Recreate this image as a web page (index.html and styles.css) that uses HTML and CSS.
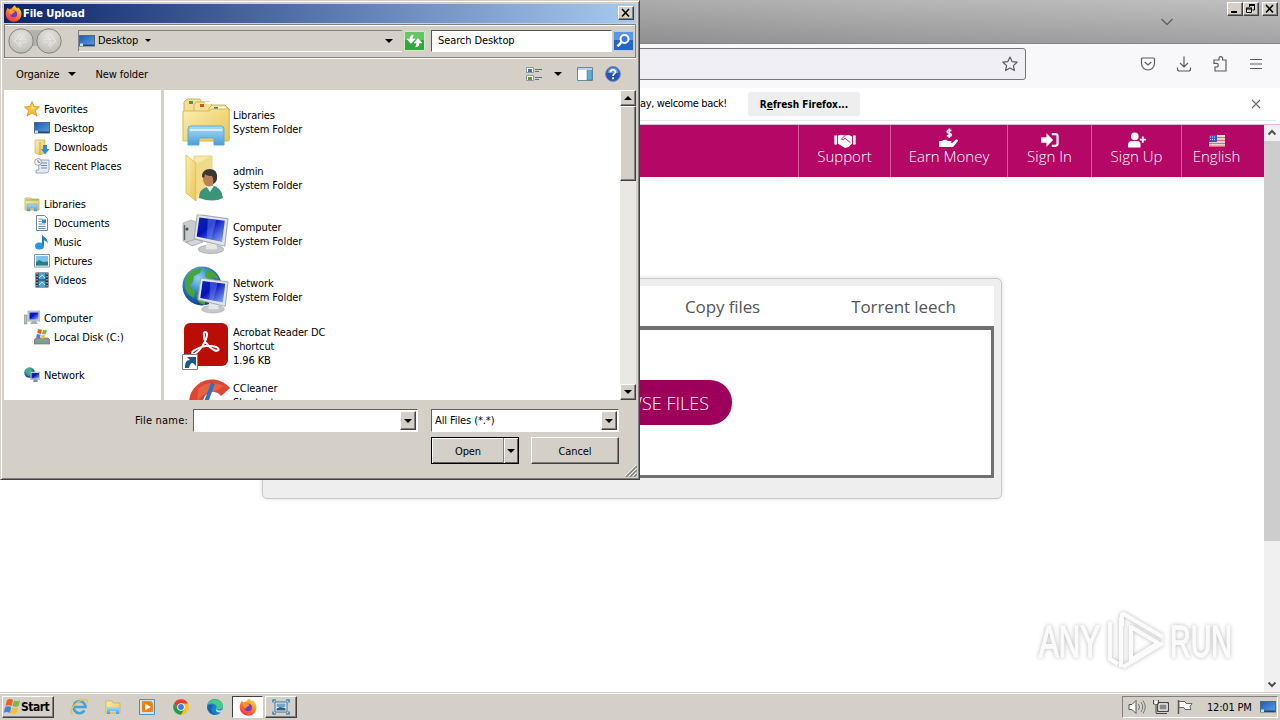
FILE: index.html
```
<!DOCTYPE html>
<html lang="en">
<head>
  <meta charset="UTF-8">
  <title>File Upload</title>
  <link rel="stylesheet" href="styles.css">
</head>
<body>

  <!-- shared gradients and icons -->
  <svg class="defs" width="0" height="0">
    <defs>
      <linearGradient id="g-screen" x1="0" y1="0" x2="1" y2="1">
        <stop offset="0" stop-color="#0a2a9c"/><stop offset=".4" stop-color="#0510c0"/><stop offset="1" stop-color="#8fb4f4"/>
      </linearGradient>
      <linearGradient id="g-desk" x1="0" y1="0" x2="1" y2="1">
        <stop offset="0" stop-color="#1c5ab4"/><stop offset="1" stop-color="#5aa0e8"/>
      </linearGradient>
      <linearGradient id="g-folder" x1="0" y1="0" x2="1" y2="1">
        <stop offset="0" stop-color="#fbeeb0"/><stop offset="1" stop-color="#e9c552"/>
      </linearGradient>
      <linearGradient id="g-blue" x1="0" y1="0" x2="0" y2="1">
        <stop offset="0" stop-color="#a9dcf6"/><stop offset="1" stop-color="#4a9edb"/>
      </linearGradient>
      <radialGradient id="g-globe" cx=".4" cy=".3" r=".8">
        <stop offset="0" stop-color="#8fd4f4"/><stop offset=".5" stop-color="#2678c4"/><stop offset="1" stop-color="#0c2f70"/>
      </radialGradient>
      <linearGradient id="g-fox" x1=".8" y1="0" x2=".2" y2="1">
        <stop offset="0" stop-color="#ffe03a"/><stop offset=".5" stop-color="#ff8020"/><stop offset="1" stop-color="#f0284c"/>
      </linearGradient>
      <radialGradient id="g-nav" cx=".5" cy=".3" r=".7">
        <stop offset="0" stop-color="#e6e4e0"/><stop offset="1" stop-color="#bebcb7"/>
      </radialGradient>
    </defs>
    <symbol id="i-firefox" viewBox="0 0 16 16">
      <path d="M2.500 2.500 4 4c1-.6 1.600-.8 2.500-.8C7 2 8 1 9.500.2c.1 1.500 1 2 2 2.800l.5-1c2 1.500 3.500 3.500 3.500 6.200A7.300 7.300 0 0 1 8.200 15.800 7.500 7.500 0 0 1 .6 8.300C.6 6 1.500 4 2.500 2.500z" fill="url(#g-fox)"/>
      <circle cx="8.200" cy="8.500" r="3.300" fill="#7a35c8"/>
      <path d="M3.500 5c1.500-.8 3-.6 4 .4L9.500 6 8 7.500c-1.500.2-1.800 1-1.300 1.800-1.500 0-3-2-3.200-4.300z" fill="#ff9a2a"/>
    </symbol>
    <symbol id="i-desktop" viewBox="0 0 16 14">
      <rect x=".5" y="1.500" width="15" height="10.500" fill="url(#g-desk)" stroke="#53677f"/>
      <path d="M1 10.500h14v1.500H1z" fill="#27466e"/><path d="M1 9.500h3v2.500H1z" fill="#b6e6e8"/>
    </symbol>
    <symbol id="i-pc" viewBox="0 0 16 16">
      <path d="M0 5h3v9H0z" fill="#b9c0b4" stroke="#777" stroke-width=".5"/>
      <path d="M4 1h12v10H4z" fill="#d4d9e2" stroke="#8890a8" stroke-width=".6"/>
      <path d="M5.500 2.500h9v7h-9z" fill="url(#g-screen)"/><path d="M8 11h4l2 3H6z" fill="#aab0b8"/>
    </symbol>
    <symbol id="i-monitor" viewBox="0 0 34 38">
      <ellipse cx="17" cy="33" rx="12" ry="4" fill="#c5c9c8" stroke="#a2a6a5" stroke-width=".7"/>
      <path d="m13 25 9 2 1 6H12z" fill="#e6e8e8"/>
      <path d="M4 0 33 4l-3 26L1 23z" fill="#e2e5e8" stroke="#a4a8ae"/>
      <path d="m6 3 24 3-2.500 20L3.500 21z" fill="url(#g-screen)"/>
      <path d="m14 4 8 1-5 19-4-1z" fill="#7c9df0" opacity=".4"/>
    </symbol>
  </svg>

  <!-- Firefox window -->
  <div class="browser">
    <div class="tabstrip">
      <svg class="alltabs" width="14" height="8" viewBox="0 0 14 8"><path d="M1.500 1 7 6.500 12.500 1" fill="none" stroke="#606060" stroke-width="1.300"/></svg>
      <div class="winbtns">
        <button class="winbtn"><svg width="14" height="12"><path d="M3 8h6v2H3z"/></svg></button>
        <button class="winbtn"><svg width="14" height="12"><path d="M5 1.500h6M5.500 1v3M10.500 1v6H8.500M5 2.500h6M2.500 5v4.500h5V5M2 5h6M2 6h6" fill="none" stroke="#000"/></svg></button>
        <button class="winbtn close"><svg width="14" height="12"><path d="m3 2 7 7.500M10 2 3 9.500" stroke="#000" stroke-width="1.600"/></svg></button>
      </div>
    </div>

    <div class="navbar">
      <div class="urlbar">
        <svg width="16" height="16" viewBox="0 0 16 16"><path d="m8 1 2.100 4.600 5 .6-3.700 3.400 1 5L8 12.100l-4.400 2.500 1-5L.9 6.200l5-.6z" fill="none" stroke="#5b5b66" stroke-width="1.200" stroke-linejoin="round"/></svg>
      </div>
      <div class="tools">
        <svg width="16" height="16" viewBox="0 0 16 16"><path d="M2.500 2h11q1 0 1 1v4.500a6.500 6.500 0 0 1-13 0V3q0-1 1-1zM4.700 6 8 9l3.300-3"/></svg>
        <svg width="16" height="16" viewBox="0 0 16 16"><path d="M8 .5v10M4 7l4 4 4-4M1.500 11.500V13q0 2 2 2h9q2 0 2-2v-1.500"/></svg>
        <svg width="16" height="16" viewBox="0 0 16 16"><path d="M7 4V2.500a1.800 1.800 0 0 1 3.600 0V4h3.400v11H3v-4h1.500a1.800 1.800 0 0 0 0-3.600H2V4z"/></svg>
        <svg width="16" height="16" viewBox="0 0 16 16"><path d="M2 3.500h12M2 8h12M2 12.500h12"/></svg>
      </div>
    </div>

    <div class="notice">
      <span class="notice-text">By the way, welcome back!</span>
      <button class="refresh">R<u>e</u>fresh Firefox...</button>
      <svg class="notice-close" width="10" height="10" viewBox="0 0 10 10"><path d="m1 1 8 8M9 1 1 9" stroke="#666" stroke-width="1.100"/></svg>
    </div>

    <div class="viewport">
      <div class="page">
        <nav class="menu">
          <a class="item support">
            <svg width="24" height="18" viewBox="0 0 24 18"><path d="M0 4h3v10H0zM21 4h3v10h-3zM4 4l4-1 4 1 4-1 4 2v8l-4 4-4 1-5-3-3-2z" fill="#fff"/><path d="m12 4-4 4q2 2 4-1l6 5" fill="none" stroke="#b50766"/></svg>
            Support</a>
          <a class="item earn">
            <svg width="20" height="20" viewBox="0 0 20 20"><path d="M0 13h3q3-2.500 6 0h3q2 1-1 2H8h5l4-3.500q3-.5 2 1.500l-5 6H0z" fill="#fff"/><path d="M12.500 2.800C10 1.300 8 2.500 8.200 3.800c.2 1.900 4.200 1 4.200 3 0 1.600-2.500 2-4.500.6M10.300.5v9.500" fill="none" stroke="#fff" stroke-width="1.600"/></svg>
            Earn Money</a>
          <a class="item signin">
            <svg width="20" height="18" viewBox="0 0 20 18"><path d="M0 6h6V1.500L13.500 9 6 16.500V12H0z" fill="#fff"/><path d="M12 2.500h4q2.500 0 2.500 2.500v8q0 2.500-2.500 2.500h-4" fill="none" stroke="#fff" stroke-width="2.500"/></svg>
            Sign In</a>
          <a class="item signup">
            <svg width="20" height="18" viewBox="0 0 20 18"><circle cx="7.500" cy="5" r="4.300" fill="#fff"/><path d="M0 17.500V14q0-4 4-4h6q4 0 4 4v3.500z" fill="#fff"/><path d="M16.500 5v7M13 8.500h7" stroke="#fff" stroke-width="2"/></svg>
            Sign Up</a>
          <a class="item lang">
            <svg width="16" height="12" viewBox="0 0 16 12"><path d="M0 0h16v12H0z" fill="#f4eef2"/><path d="M0 2.500h16M0 5.500h16M0 8.500h16M0 11.200h16" stroke="#e4686c" stroke-width="1.500"/><path d="M0 0h8v7H0z" fill="#315cc0"/><path d="M1 2h6M1 4.500h6" stroke="#dce6ff" stroke-dasharray="1 1"/></svg>
            English</a>
        </nav>

        <div class="uploader">
          <div class="tabs">
            <span class="tab copy">Copy files</span>
            <span class="tab">Torrent leech</span>
          </div>
          <div class="dropzone">
            <button class="browse">BROWSE FILES</button>
          </div>
        </div>
      </div>
      <div class="scrollbar">
        <svg width="16" height="16" viewBox="0 0 16 16"><path d="m4.500 9.500 3.500-3.500 3.500 3.500" fill="none" stroke="#505050" stroke-width="2"/></svg>
        <div class="thumb"></div>
        <svg class="down" width="16" height="16" viewBox="0 0 16 16"><path d="M4.500 6.500 8 10l3.500-3.500" fill="none" stroke="#505050" stroke-width="2"/></svg>
      </div>
    </div>
  </div>

  <svg class="watermark" width="206" height="72" viewBox="0 0 206 72">
    <g class="mark">
      <text x="7" y="52" textLength="61" lengthAdjust="spacingAndGlyphs">ANY</text>
      <text x="138" y="52" textLength="62" lengthAdjust="spacingAndGlyphs">RUN</text>
      <path d="M89 12v50M78 17v37l8 5M90 8l41 24M90 8v13M99 22l27 16-27 17zM131 38 91 62" />
    </g>
  </svg>

  <!-- File Upload dialog -->
  <div class="dialog">
    <div class="titlebar">
      <svg width="17" height="17"><use href="#i-firefox"/></svg>
      <span class="title">File Upload</span>
      <button class="winbtn"><svg width="14" height="12"><path d="m3 2 7 7.500M10 2 3 9.500" stroke="#000" stroke-width="1.600"/></svg></button>
    </div>

    <div class="addressrow">
      <svg class="backfwd" width="56" height="28" viewBox="0 0 56 28">
        <path d="M14 3h28v12q-14 8-28 0z" fill="#b4b2ac"/>
        <g fill="url(#g-nav)" stroke="#85837e"><circle cx="14" cy="14" r="12.200"/><circle cx="42" cy="14" r="12.200"/></g>
        <path d="M20 14H9m5-5-5 5 5 5M36 14h11m-5-5 5 5-5 5" fill="none" stroke="#f6f5f3" stroke-width="2.600"/>
        <path d="M20 14H9m5-5-5 5 5 5M36 14h11m-5-5 5 5-5 5" fill="none" stroke="#cfcdc8" stroke-width="1.400"/>
      </svg>
      <div class="address">
        <svg width="16" height="14"><use href="#i-desktop"/></svg>
        <span>Desktop</span>
        <i class="arrow small"></i>
        <i class="arrow end"></i>
      </div>
      <svg class="go" width="21" height="20" viewBox="0 0 21 20"><path d="M.5.5h20v19H.5z" fill="#32a83c" stroke="#cde9cb"/><path d="M1 1h19v8H1z" fill="#64c564"/><path d="M9.500 4Q6 4 6 7.500V8H3l4 4.500L11 8H8.500M11.500 16q3.500 0 3.500-3.500V12h3l-4-4.500L10 12h2.500" fill="#fff" stroke="#fff" stroke-width=".6"/></svg>
      <div class="search">Search Desktop</div>
      <svg class="lens" width="21" height="20" viewBox="0 0 21 20"><path d="M.5.5h20v19H.5z" fill="#2363cc" stroke="#b9cdeb"/><path d="M1 1h19v8H1z" fill="#5b95e6"/><circle cx="11.500" cy="8" r="4" fill="#3d77db" stroke="#fff" stroke-width="2"/><path d="M8.500 11 4.500 15.500" stroke="#fff" stroke-width="2.600"/></svg>
    </div>

    <div class="commands">
      <span>Organize</span><i class="arrow"></i>
      <span class="newfolder">New folder</span>
      <svg class="views" width="16" height="16" viewBox="0 0 16 16"><path d="M.5 1.500h7v5h-7zM.5 9.500h7v5h-7z" fill="#fff" stroke="#8c979f"/><path d="M2 3h4v3H2z" fill="#2e79ba"/><path d="M2 11h4v3H2z" fill="#5b9831"/><path d="M9 3.500h7M9 5.500h4M9 11.500h7M9 13.500h4" stroke="#57708a"/></svg>
      <i class="arrow"></i>
      <svg class="pane" width="16" height="14" viewBox="0 0 16 14"><path d="M.5.5h15v13H.5z" fill="#fff" stroke="#6c879b"/><path d="M1 1h14v2H1z" fill="#b9d5e9"/><path d="M10 3.500h5V13h-5z" fill="#55b1d5" stroke="#50758c" stroke-width=".6"/></svg>
      <svg class="help" width="16" height="16" viewBox="0 0 16 16"><circle cx="8" cy="8" r="7.400" fill="#2454b0" stroke="#7087b0"/><path d="M2.500 7a5.500 5.500 0 0 1 11 0z" fill="#6c96dc"/><path d="M5.500 6.200C5.500 3 10.500 3 10.500 6c0 2-2.500 1.800-2.500 4M8 11.300v2" fill="none" stroke="#fff" stroke-width="1.700"/></svg>
    </div>

    <div class="panes">
      <div class="sidebar">
        <div class="node top"><svg width="16" height="16" viewBox="0 0 16 16"><path d="m8 .5 2.200 5 5.400.4-4.200 3.600 1.400 5.500L8 12l-4.800 3 1.400-5.500L.4 5.900l5.400-.4z" fill="#ffc233" stroke="#e08a18" stroke-width=".8"/><path d="m8 3 1.200 3.500 3 .3-5 2z" fill="#ffec9a"/></svg>Favorites</div>
        <div class="node"><svg width="16" height="14"><use href="#i-desktop"/></svg>Desktop</div>
        <div class="node"><svg width="16" height="16" viewBox="0 0 16 16"><path d="M1 1h10v13l-5 2-5-2z" fill="url(#g-folder)" stroke="#cba43f" stroke-width=".6"/><path d="M6 3v13" stroke="#c9a648"/><path d="M9 6h4v4h2.500l-4.500 5.500L7 10h2z" fill="#2e8edb"/></svg>Downloads</div>
        <div class="node"><svg width="16" height="16" viewBox="0 0 16 16"><path d="M4 2h11v10q0 3-3 3H2v-3h3z" fill="#e5ebf2" stroke="#8b98a8" stroke-width=".8"/><path d="M7 5h6M7 7.500h6M7 10h6" stroke="#6e87a6"/><circle cx="4" cy="4" r="3.400" fill="#f6f6f6" stroke="#8a8f94" stroke-width=".8"/><path d="M4 2v2.300h2" fill="none" stroke="#4a5560" stroke-width=".7"/></svg>Recent Places</div>

        <div class="node top gap"><svg width="16" height="16" viewBox="0 0 16 16"><path d="M1 3V2h6l1 1h7v11H1z" fill="url(#g-folder)" stroke="#b1a552" stroke-width=".7"/><path d="M2 4h12" stroke="#6cb05a"/><path d="M3 15V8h10v7h-3v-3H6v3z" fill="url(#g-blue)" stroke="#5898c0" stroke-width=".5"/></svg>Libraries</div>
        <div class="node"><svg width="16" height="16" viewBox="0 0 16 16"><path d="M2.500.5h8l3 3v12h-11z" fill="#fff" stroke="#6c87a8"/><path d="M4.500 4h4M4.500 6.500h3M4.500 9h7M4.500 11.500h7M4.500 13.500h7" stroke="#7991b0"/><path d="M8 4.500h4V8H8z" fill="#3a84c0"/></svg>Documents</div>
        <div class="node"><svg width="16" height="16" viewBox="0 0 16 16"><ellipse cx="5.500" cy="12" rx="4.500" ry="3.500" fill="#2f96dc"/><path d="M8 12V.5c1 2.500 6.500 3 5.500 9.500-.5-2.500-2-3.500-3.500-3.500V12z" fill="#2481cb"/></svg>Music</div>
        <div class="node"><svg width="16" height="14" viewBox="0 0 16 14"><path d="M.5.500h15v12.500H.5z" fill="#fff" stroke="#8395a5"/><path d="M2 2h12v9.500H2z" fill="#7bc3ea"/><path d="M2 8.500 5 6l4 2 5-.5v4H2z" fill="#2b7b83"/></svg>Pictures</div>
        <div class="node"><svg width="16" height="16" viewBox="0 0 16 16"><path d="M1.500.500h13v15h-13z" fill="#263340"/><path d="M4.500 1h7v6.500h-7zM4.500 8.500h7V15h-7z" fill="#4aa4da"/><path d="M3 1v14M13 1v14" stroke="#e8eef2" stroke-dasharray="1.500 1.500"/><path d="m5 6 3-3 3 3M5 13l3-3 3 3" fill="none" stroke="#c6e2f0"/></svg>Videos</div>

        <div class="node top gap"><svg width="16" height="16"><use href="#i-pc"/></svg>Computer</div>
        <div class="node"><svg width="16" height="16" viewBox="0 0 16 16"><path d="m2 9 12 0 2 2v4H0v-4z" fill="#8c969b" stroke="#666e73" stroke-width=".6"/><path d="M2 12h9v1.500H2z" fill="#4cc25c"/><path d="m4 0 4 .8L7 5 3.300 4z" fill="#e65a2b"/><path d="m9 1 4 .2L11.500 5.500 8 5z" fill="#7cb83b"/><path d="m3 5 3.700.8-.9 3.700L2 8.500z" fill="#3b85d6"/><path d="m7.700 6 3.500.3-1 3.500-3.500-.3z" fill="#f2c02b"/></svg>Local Disk (C:)</div>

        <div class="node top gap"><svg width="16" height="16" viewBox="0 0 16 16"><circle cx="5.500" cy="5.500" r="5.300" fill="url(#g-globe)"/><path d="M2 3q3-3 5-1L5 5l2 3-3 1z" fill="#43b05c"/><path d="M6.500 5H16v7.500H6.500z" fill="#dce2ec" stroke="#808aa4" stroke-width=".5"/><path d="M7.500 6H15v5.500H7.500z" fill="url(#g-screen)"/><path d="M10 12.500h3l1 2.500H9z" fill="#8890a0"/></svg>Network</div>
      </div>

      <div class="files">
        <div class="file">
          <svg width="48" height="48" viewBox="0 0 48 48">
            <path d="M2 4 5 1h13l2 4v20H2z" fill="#f3df94" stroke="#cdb25a"/><path d="M12 7l2-3h14l3 5v18H12z" fill="#f5e093" stroke="#cdb25a"/>
            <path d="M27 10l3-3h13l4 4v30H27z" fill="#f7e39a" stroke="#cdb25a"/>
            <path d="M7 3h4v3H7z" fill="#48945a"/><path d="M18 6h4v3h-4z" fill="#d05030"/><path d="M32 9h4v3h-4z" fill="#3f8270"/>
            <path d="M23 5h7M36 10h8" stroke="#fff" stroke-width="2"/>
            <path d="M1 13h26l3-2h17v32H1z" fill="url(#g-folder)" stroke="#dcb94d"/>
            <path d="M6 47V31q0-3 3-3h30q3 0 3 3v16H32v-7H17v7z" fill="url(#g-blue)" stroke="#5aa7d8"/><path d="M8 32h32" stroke="#d5effb" stroke-width="2"/>
          </svg>
          <div>Libraries<br>System Folder</div>
        </div>
        <div class="file">
          <svg width="48" height="48" viewBox="0 0 48 48">
            <path d="M12 2h18v36H12z" fill="#f7e8a6" stroke="#e0c56c" stroke-width=".7"/><path d="M4 1l10 8v38L4 39z" fill="url(#g-folder)" stroke="#d3b04c" stroke-width=".7"/><path d="M14 10 30 2v34l-16 10z" fill="#f0d781" opacity=".8"/>
            <path d="M17 44q0-9 8-11l4-2q11 2 12 13-10 5-24 0z" fill="#3d9377"/><path d="m24 32 4 6 4-6z" fill="#e8f0ec"/>
            <ellipse cx="27" cy="25" rx="6" ry="7.500" fill="#b98158"/><path d="M20 23q0-8 8-8 8 0 7 10-1 4-4 5 1-5-1-8-5 0-7-2l-1 4z" fill="#3b3732"/>
          </svg>
          <div>admin<br>System Folder</div>
        </div>
        <div class="file">
          <svg width="48" height="48" viewBox="0 0 48 48">
            <path d="m1 13 8-3 5 2v19l-9 2-4-2z" fill="#c9cccd" stroke="#aaadaf" stroke-width=".7"/><path d="M2.500 15v15" stroke="#60666a" stroke-width="1.500"/><circle cx="5" cy="19" r="1.500" fill="#444"/>
            <path d="m4 32 11-3 6 3-11 4z" fill="#d4d6d8" stroke="#999" stroke-width=".7"/>
            <svg x="11" y="4" width="36" height="41" viewBox="0 0 34 38"><use href="#i-monitor" width="34" height="38"/></svg>
          </svg>
          <div>Computer<br>System Folder</div>
        </div>
        <div class="file">
          <svg width="48" height="48" viewBox="0 0 48 48">
            <circle cx="20" cy="20" r="19.500" fill="url(#g-globe)"/><path d="M4 11Q10 2 20 2l-2 5-6 3-1 6-4 4 6 5-1 7-6-4Q1 21 4 11zM24 3q10 2 13 11l-6-3-3 4-5-5zM14 28l9 3v8q-8-1-9-11z" fill="#48a33b"/>
            <svg x="15" y="12" width="32" height="36" viewBox="0 0 34 38"><use href="#i-monitor" width="34" height="38"/></svg>
          </svg>
          <div>Network<br>System Folder</div>
        </div>
        <div class="file">
          <svg width="48" height="48" viewBox="0 0 48 48">
            <rect x="2" y="1" width="44" height="43" rx="6" fill="#b90d05"/>
            <path d="M22 13c-1-4 3-4 3 0-1 8-8 16-11 18-4 3-6-1-1-3 7-4 15-5 21-3 5 2 2 5-2 3-5-2-11-10-10-15z" fill="none" stroke="#fff" stroke-width="2"/>
            <path d="M.5 32.500h15v15H.5z" fill="#fff" stroke="#7b8088"/><path d="M3 46c0-5 1-8 5-8l-3-3h9v9l-3-3c-3 0-3 2-4 5z" fill="#1e5494"/>
          </svg>
          <div>Acrobat Reader DC<br>Shortcut<br>1.96 KB</div>
        </div>
        <div class="file">
          <svg width="48" height="48" viewBox="0 0 48 48">
            <path d="M48 10A23 23 0 1 0 46 41L38 31a10 10 0 1 1 1-13z" fill="#de4630"/><path d="M16 11Q28 0 42 8L32 14q-12-1-17 12z" fill="#f07254" opacity=".6"/>
            <path d="m31 5-9 25" stroke="#2a74bf" stroke-width="4"/>
          </svg>
          <div>CCleaner<br>Shortcut<br>&nbsp;</div>
        </div>
      </div>

      <div class="classic-scroll">
        <button class="sb"><i class="arrow up"></i></button>
        <div class="sb-thumb"></div>
        <button class="sb sb-down"><i class="arrow"></i></button>
      </div>
    </div>

    <div class="footer">
      <label class="fname">File name:</label>
      <div class="combo name"><span></span><button class="drop"><i class="arrow"></i></button></div>
      <div class="combo type"><span>All Files (*.*)</span><button class="drop"><i class="arrow"></i></button></div>
      <div class="open"><button>Open</button><button class="split"><i class="arrow"></i></button></div>
      <button class="cancel">Cancel</button>
    </div>
    <svg class="grip" width="12" height="12" viewBox="0 0 12 12"><path d="M1 12 12 1M5 12l7-7M9 12l3-3" stroke="#808080" stroke-width="1.500"/><path d="M0 11 11 0M4 11l7-7M8 11l3-3" stroke="#fff" stroke-width=".7"/></svg>
  </div>

  <!-- taskbar -->
  <div class="taskbar">
    <button class="start"><svg width="18" height="18" viewBox="0 0 18 18"><path d="M4 2q3-2 6 0L8.500 8q-3-1.500-6 0z" fill="#e8622b"/><path d="M11 2.500q3 1.500 6 0L15.500 8q-3 1.500-6 0z" fill="#7db942"/><path d="M2.200 9q3-1.500 6 0L7 15q-3-2-6.500 0z" fill="#3f86d8"/><path d="M9.200 9.500q3 1.500 6 0L13.500 15q-3 2-6 0z" fill="#f4c02e"/></svg>Start</button>
    <div class="quick">
      <svg width="18" height="18" viewBox="0 0 18 18"><path d="M14.500 12.500A6 6 0 1 1 15.500 9H5" fill="none" stroke="#3fa2e0" stroke-width="2.600"/><path d="M2.500 16.500C-3 11 11-1 17 2q1 1 0 3" fill="none" stroke="#efc043" stroke-width="1.500"/></svg>
      <svg width="18" height="18" viewBox="0 0 18 18"><path d="M2 3h6l1 2h7v10H2z" fill="url(#g-folder)" stroke="#c5a957" stroke-width=".7"/><path d="M3 16V9h12v7h-3v-3H6v3z" fill="url(#g-blue)"/></svg>
      <svg width="18" height="18" viewBox="0 0 18 18"><path d="M1.500 1.500h15v15h-15z" fill="#cfe3f2" stroke="#528dc0"/><path d="M4 3h9l2 2v9H4z" fill="#f58a15"/><circle cx="9" cy="9" r="5" fill="#f27a0a"/><path d="m7 5.500 6 3.500-6 3.500z" fill="#fff"/></svg>
      <svg width="18" height="18" viewBox="0 0 18 18"><circle cx="9" cy="9" r="7.800" fill="#fbc116"/><path d="M2 5.500A7.800 7.800 0 0 1 16 5.500H9L5.500 10z" fill="#e33b2e"/><path d="M2 5.500A7.800 7.800 0 0 0 9 16.800l3.500-6H6z" fill="#269a48"/><circle cx="9" cy="9" r="3.800" fill="#fff"/><circle cx="9" cy="9" r="2.900" fill="#3a7ae8"/></svg>
      <svg width="18" height="18" viewBox="0 0 18 18"><circle cx="9" cy="9" r="8" fill="#1583cf"/><path d="M1.500 7C3 0 16-1 17 8c0 4-5 4-6.500 2.500C12 6 5 4 1.500 7z" fill="#46cb82"/><path d="M10.500 9q-1 3 2.500 3.500 2.500 0 4-1.500l-1 4-5-1q-2-2-.5-5z" fill="#d4d0c8"/><path d="M7 7q-4 6 3 10-8-1-9-8 2-3 6-2z" fill="#1b5fae"/></svg>
    </div>
    <div class="task active"><svg width="18" height="18"><use href="#i-firefox"/></svg></div>
    <div class="task"><svg width="18" height="16" viewBox="0 0 18 16"><path d="M3 3h12v10H3z" fill="#eef6fa" stroke="#456d86"/><path d="M4.500 9.500 8 8l5.500 1v2.500h-9z" fill="#2c6376"/><path d="M4.500 4.500h9V8h-9z" fill="#69a9d0"/><path d="M1 3.500V1h3M14 1h3v2.500M17 12.500V15h-3M4 15H1v-2.500" fill="none" stroke="#3c8ac0" stroke-width="1.600"/></svg></div>
    <div class="tray">
      <svg width="18" height="16" viewBox="0 0 18 16"><path d="M1 5.500h3l4-4v13l-4-4H1z" fill="#fff" stroke="#555"/><path d="M10.500 5q2 3 0 6M13 3q3.500 5 0 10M15 1.500q4.500 6.500 0 13" fill="none" stroke="#777"/></svg>
      <svg width="18" height="16" viewBox="0 0 18 16"><path d="M5.500 3.500h11v9h-11z" fill="#aaa" stroke="#444"/><path d="M7 5h8v6H7z" fill="#888" stroke="#fff"/><path d="M1.500 1v4h5V1M4 5v9M4 14.500h11" fill="none" stroke="#444"/><path d="M2.500 2h3v3h-3z" fill="#fff"/></svg>
      <svg width="18" height="16" viewBox="0 0 18 16"><path d="M2.500 1v14" stroke="#555" stroke-width="1.500"/><path d="M3 2.500h6l1 2h6l-2 3 1 3H9l-1-2H3z" fill="#fff" stroke="#666"/></svg>
      <span class="clock">12:01 PM</span>
      <svg width="16" height="14"><use href="#i-desktop"/></svg>
    </div>
  </div>

</body>
</html>
```

FILE: styles.css
```
* {
  box-sizing: border-box;
}
body {
  margin: 0;
  width: 1280px;
  height: 720px;
  overflow: hidden;
  position: relative;
  display: flex;
  flex-direction: column;
  background: #fff;
  color: #000;
  font-family: Tahoma, "DejaVu Sans Condensed", "DejaVu Sans", sans-serif;
  font-size: 11px;
  letter-spacing: -0.1px;
}
button {
  font: inherit;
  letter-spacing: inherit;
  color: inherit;
  padding: 0;
  margin: 0;
  border: 0;
  background: none;
}
svg {
  display: block;
  flex: none;
}
.defs {
  position: absolute;
}

/* classic windows bits */
.winbtn {
  width: 16px;
  height: 14px;
  background: #d4d0c8;
  border: 1px solid;
  border-color: #fff #404040 #404040 #fff;
  box-shadow: inset -1px -1px #808080;
}
.arrow {
  flex: none;
  width: 0;
  height: 0;
  border: 4px solid transparent;
  border-top-color: #000;
  border-bottom: 0;
}
.arrow.small {
  border-width: 3px;
  border-bottom: 0;
}
.arrow.up {
  border: 4px solid transparent;
  border-bottom-color: #000;
  border-top: 0;
}

/* browser */
.browser {
  height: 692px;
  display: flex;
  flex-direction: column;
}
.tabstrip {
  height: 44px;
  display: flex;
  justify-content: flex-end;
  background: linear-gradient(rgba(255,255,255,.16), rgba(90,90,90,.2)), linear-gradient(100deg, #9c9c9c 50%, #a8a8a8 70%, #b4b4b4);
  border-bottom: 1px solid #858585;
}
.alltabs {
  margin: 18px 53px 0 0;
}
.winbtns {
  display: flex;
  padding: 2px 2px 0 0;
}
.winbtns .close {
  margin-left: 3px;
}
.navbar {
  height: 44px;
  display: flex;
  justify-content: flex-end;
  align-items: flex-start;
  background: #f8f8fa;
  padding: 4px 16px 0 0;
}
.urlbar {
  width: 800px;
  height: 32px;
  display: flex;
  justify-content: flex-end;
  align-items: center;
  padding-right: 7px;
  background: #f0f0f4;
  border: 1px solid #74747c;
  border-radius: 3px;
}
.tools {
  display: flex;
  gap: 20px;
  margin: 8px 0 0 114px;
}
.tools svg {
  fill: none;
  stroke: #5b5b66;
  stroke-width: 1.2;
}
.notice {
  height: 33px;
  display: flex;
  align-items: center;
  justify-content: flex-end;
  background: #fff;
  border-bottom: 1px solid #e4e8ea;
  margin-right: 4px;
}
.notice-text {
  margin: 0 21px 2px 0;
  letter-spacing: -0.35px;
}
.refresh {
  width: 112px;
  height: 24px;
  border-radius: 3px;
  background: #eeeeef;
  font-weight: bold;
  font-size: 10px;
  letter-spacing: 0;
}
.notice-close {
  margin: 0 15px 0 391px;
}
.viewport {
  flex: 1;
  display: flex;
  margin-top: 3px;
  border-top: 1px solid #e3bcd2;
}
.page {
  flex: 1;
  font-family: "Open Sans", "Noto Sans", sans-serif;
  letter-spacing: 0;
}
.menu {
  height: 52px;
  display: flex;
  justify-content: flex-end;
  background: #b50766;
}
.item {
  display: flex;
  flex-direction: column;
  align-items: center;
  height: 52px;
  border-left: 1px solid #d45c9b;
  color: #fff;
  font-size: 15px;
  font-weight: 300;
  line-height: 17px;
  padding-top: 7px;
}
.item svg {
  height: 16px;
}
.support { width: 92px; }
.earn { width: 117px; padding-top: 3px; }
.earn svg { height: 20px; }
.signin { width: 84px; }
.signup { width: 90px; }
.lang { width: 83px; padding: 10px 13px 0 0; }
.lang svg { height: 12px; margin-bottom: 1px; }

.scrollbar {
  width: 16px;
  background: #f0f0f0;
  display: flex;
  flex-direction: column;
}
.thumb {
  height: 400px;
  background: #cdcdcd;
}
.down {
  margin-top: auto;
}
.uploader {
  width: 740px;
  height: 221px;
  margin: 101px 0 0 262px;
  padding: 7px 7px 0;
  background: #eee;
  border: 1px solid #c8c8c8;
  border-radius: 5px;
  box-shadow: 0 0 5px #ddd;
}
.tabs {
  display: grid;
  grid-template-columns: repeat(4, 1fr);
  height: 40px;
  background: #fff;
  color: #555;
  font-size: 17px;
  letter-spacing: -0.1px;
  line-height: 41px;
  text-align: center;
}
.copy {
  grid-column: 3;
}
.dropzone {
  height: 152px;
  background: #fff;
  border: 4px solid #707070;
  border-width: 4px 3px 3px;
  display: flex;
  justify-content: center;
  padding-top: 50px;
}
.browse {
  width: 200px;
  height: 45px;
  padding-right: 23px;
  border-radius: 22px;
  background: #9c005b;
  color: #fff;
  font-size: 18px;
  font-weight: 300;
  text-align: right;
}

.watermark {
  position: absolute;
  left: 1032px;
  top: 605px;
  overflow: visible;
}
.mark {
  filter: drop-shadow(0 0 2px rgba(0,0,0,.28));
  fill: #fbfbfb;
  font: 45px "Liberation Sans", sans-serif;
  letter-spacing: 0;
}
.mark text {
  stroke: #fbfbfb;
  stroke-width: 1.5;
}
.mark path {
  fill: none;
  stroke: #fbfbfb;
  stroke-width: 4;
  stroke-linejoin: round;
}

/* dialog */
.dialog {
  position: absolute;
  left: 0;
  top: 0;
  width: 640px;
  height: 480px;
  padding: 2px;
  display: flex;
  flex-direction: column;
  background: #d4d0c8;
  border: 1px solid;
  border-color: #d4d0c8 #404040 #404040 #d4d0c8;
  box-shadow: inset 1px 1px #fff, inset -1px -1px #808080;
}
.titlebar {
  height: 19px;
  margin: 1px;
  display: flex;
  align-items: center;
  padding: 0 2px 1px 1px;
  background: linear-gradient(90deg, #0a246a, #a6caf0);
  color: #fff;
}
.title {
  flex: 1;
  padding-left: 1px;
  font-family: "DejaVu Sans Condensed", sans-serif;
  font-weight: bold;
  font-size: 11px;
  letter-spacing: -0.1px;
}
.addressrow {
  height: 34px;
  margin: 0 1px;
  display: flex;
  align-items: center;
  border: 1px solid #808080;
  box-shadow: inset 0 1px #fff, 0 1px #fff;
}
.backfwd {
  margin-left: 2px;
}
.address {
  width: 324px;
  height: 22px;
  margin-left: 15px;
  padding-bottom: 1px;
  display: flex;
  align-items: center;
  border: 1px solid;
  border-color: #808080 #fff #fff #808080;
  border-right: 0;
}
.address span {
  margin: 0 7px 0 3px;
}
.arrow.end {
  margin-left: auto;
  margin-right: 9px;
}
.go {
  margin: 0 6px 0 2px;
}
.search {
  flex: 1;
  height: 22px;
  padding-left: 6px;
  line-height: 20px;
  background: #fff;
  border: 1px solid;
  border-color: #555 #fff #fff #555;
}
.lens {
  margin: 0 1px 0 1px;
}
.commands {
  height: 32px;
  display: flex;
  align-items: center;
  padding: 0 16px 0 13px;
}
.commands span {
  margin-right: 8px;
}
.commands .newfolder {
  margin: 0 auto 0 20px;
}
.commands .views {
  margin-right: 12px;
}
.pane {
  margin: 0 12px 0 15px;
}
.panes {
  height: 310px;
  display: flex;
  margin: 0 1px;
  overflow: hidden;
  background: #fff;
}
.sidebar {
  width: 160px;
  padding-top: 10px;
  border-right: 3px solid #d4d0c8;
}
.node {
  height: 19px;
  display: flex;
  align-items: center;
  gap: 4px;
  padding-left: 30px;
  white-space: nowrap;
}
.node svg {
  margin-bottom: 2px;
}
.node.top {
  padding-left: 20px;
}
.gap {
  margin-top: 19px;
}
.files {
  flex: 1;
  padding: 4px 0 0 18px;
}
.file {
  height: 56px;
  display: flex;
  align-items: center;
  gap: 3px;
  line-height: 14px;
}
.file div {
  padding-top: 2px;
}
.classic-scroll {
  width: 16px;
  display: flex;
  flex-direction: column;
  background: #eae8e4;
}
.sb, .sb-thumb, .drop {
  background: #d4d0c8;
  border: 1px solid;
  border-color: #fff #404040 #404040 #fff;
  box-shadow: inset -1px -1px #808080;
}
.sb, .drop {
  display: flex;
  align-items: center;
  justify-content: center;
  width: 16px;
  height: 16px;
}
.sb-thumb {
  height: 75px;
}
.sb-down {
  margin-top: auto;
}
.footer {
  flex: 1;
  display: grid;
  grid-template-columns: 178px 226px 88px 88px;
  grid-template-rows: 23px 27px;
  column-gap: 12px;
  row-gap: 5px;
  padding-top: 9px;
}
.fname {
  text-align: right;
  line-height: 24px;
  margin-right: -7px;
  letter-spacing: 0.2px;
}
.combo {
  display: flex;
  height: 23px;
  padding: 1px;
  background: #fff;
  border: 1px solid;
  border-color: #606060 #fff #fff #606060;
}
.combo span {
  flex: 1;
  line-height: 20px;
  padding-left: 2px;
}
.drop {
  height: 19px;
}
.name {
  margin-right: 1px;
}
.type {
  grid-column: 3 / 5;
}
.open {
  grid-column: 3;
  display: flex;
  border: 1px solid #000;
  box-shadow: inset 1px 1px #fff, inset -1px -1px #606060;
}
.open button:first-child {
  flex: 1;
  padding: 2px 0 0 1px;
}
.split {
  width: 15px;
  display: flex;
  align-items: center;
  justify-content: center;
  border-left: 1px solid #808080;
  box-shadow: inset 1px 0 #fff;
}
.cancel {
  padding-top: 2px;
  border: 1px solid;
  border-color: #fff #404040 #404040 #fff;
  box-shadow: inset -1px -1px #808080;
}
.grip {
  position: absolute;
  right: 2px;
  bottom: 2px;
}

/* taskbar */
.taskbar {
  height: 28px;
  display: flex;
  align-items: center;
  padding: 1px 0 0 2px;
  background: #d4d0c8;
  border-top: 1px solid #d4d0c8;
  box-shadow: inset 0 1px #fff;
}
.start {
  width: 52px;
  height: 22px;
  display: flex;
  align-items: center;
  font-family: "DejaVu Sans Condensed", sans-serif;
  font-weight: bold;
  font-size: 12px;
  letter-spacing: -0.5px;
  border: 1px solid;
  border-color: #fff #404040 #404040 #fff;
  box-shadow: inset -1px -1px #808080;
}
.quick {
  display: flex;
  gap: 16px;
  margin: 0 7px 0 16px;
}
.task {
  width: 32px;
  height: 22px;
  display: flex;
  align-items: center;
  justify-content: center;
  margin-right: 2px;
  border: 1px solid;
  border-color: #fff #404040 #404040 #fff;
  box-shadow: inset -1px -1px #808080;
}
.task.active {
  width: 31px;
  margin-left: 1px;
  background: #fff;
  border-color: #404040 #fff #fff #404040;
  box-shadow: none;
}
.tray {
  width: 156px;
  height: 22px;
  margin: 0 2px 0 auto;
  display: flex;
  align-items: center;
  gap: 6px;
  padding: 0 1px 0 5px;
  border: 1px solid;
  border-color: #808080 #fff #fff #808080;
}
.clock {
  margin: 0 auto 0 7px;
  white-space: nowrap;
  letter-spacing: -0.2px;
}
```
